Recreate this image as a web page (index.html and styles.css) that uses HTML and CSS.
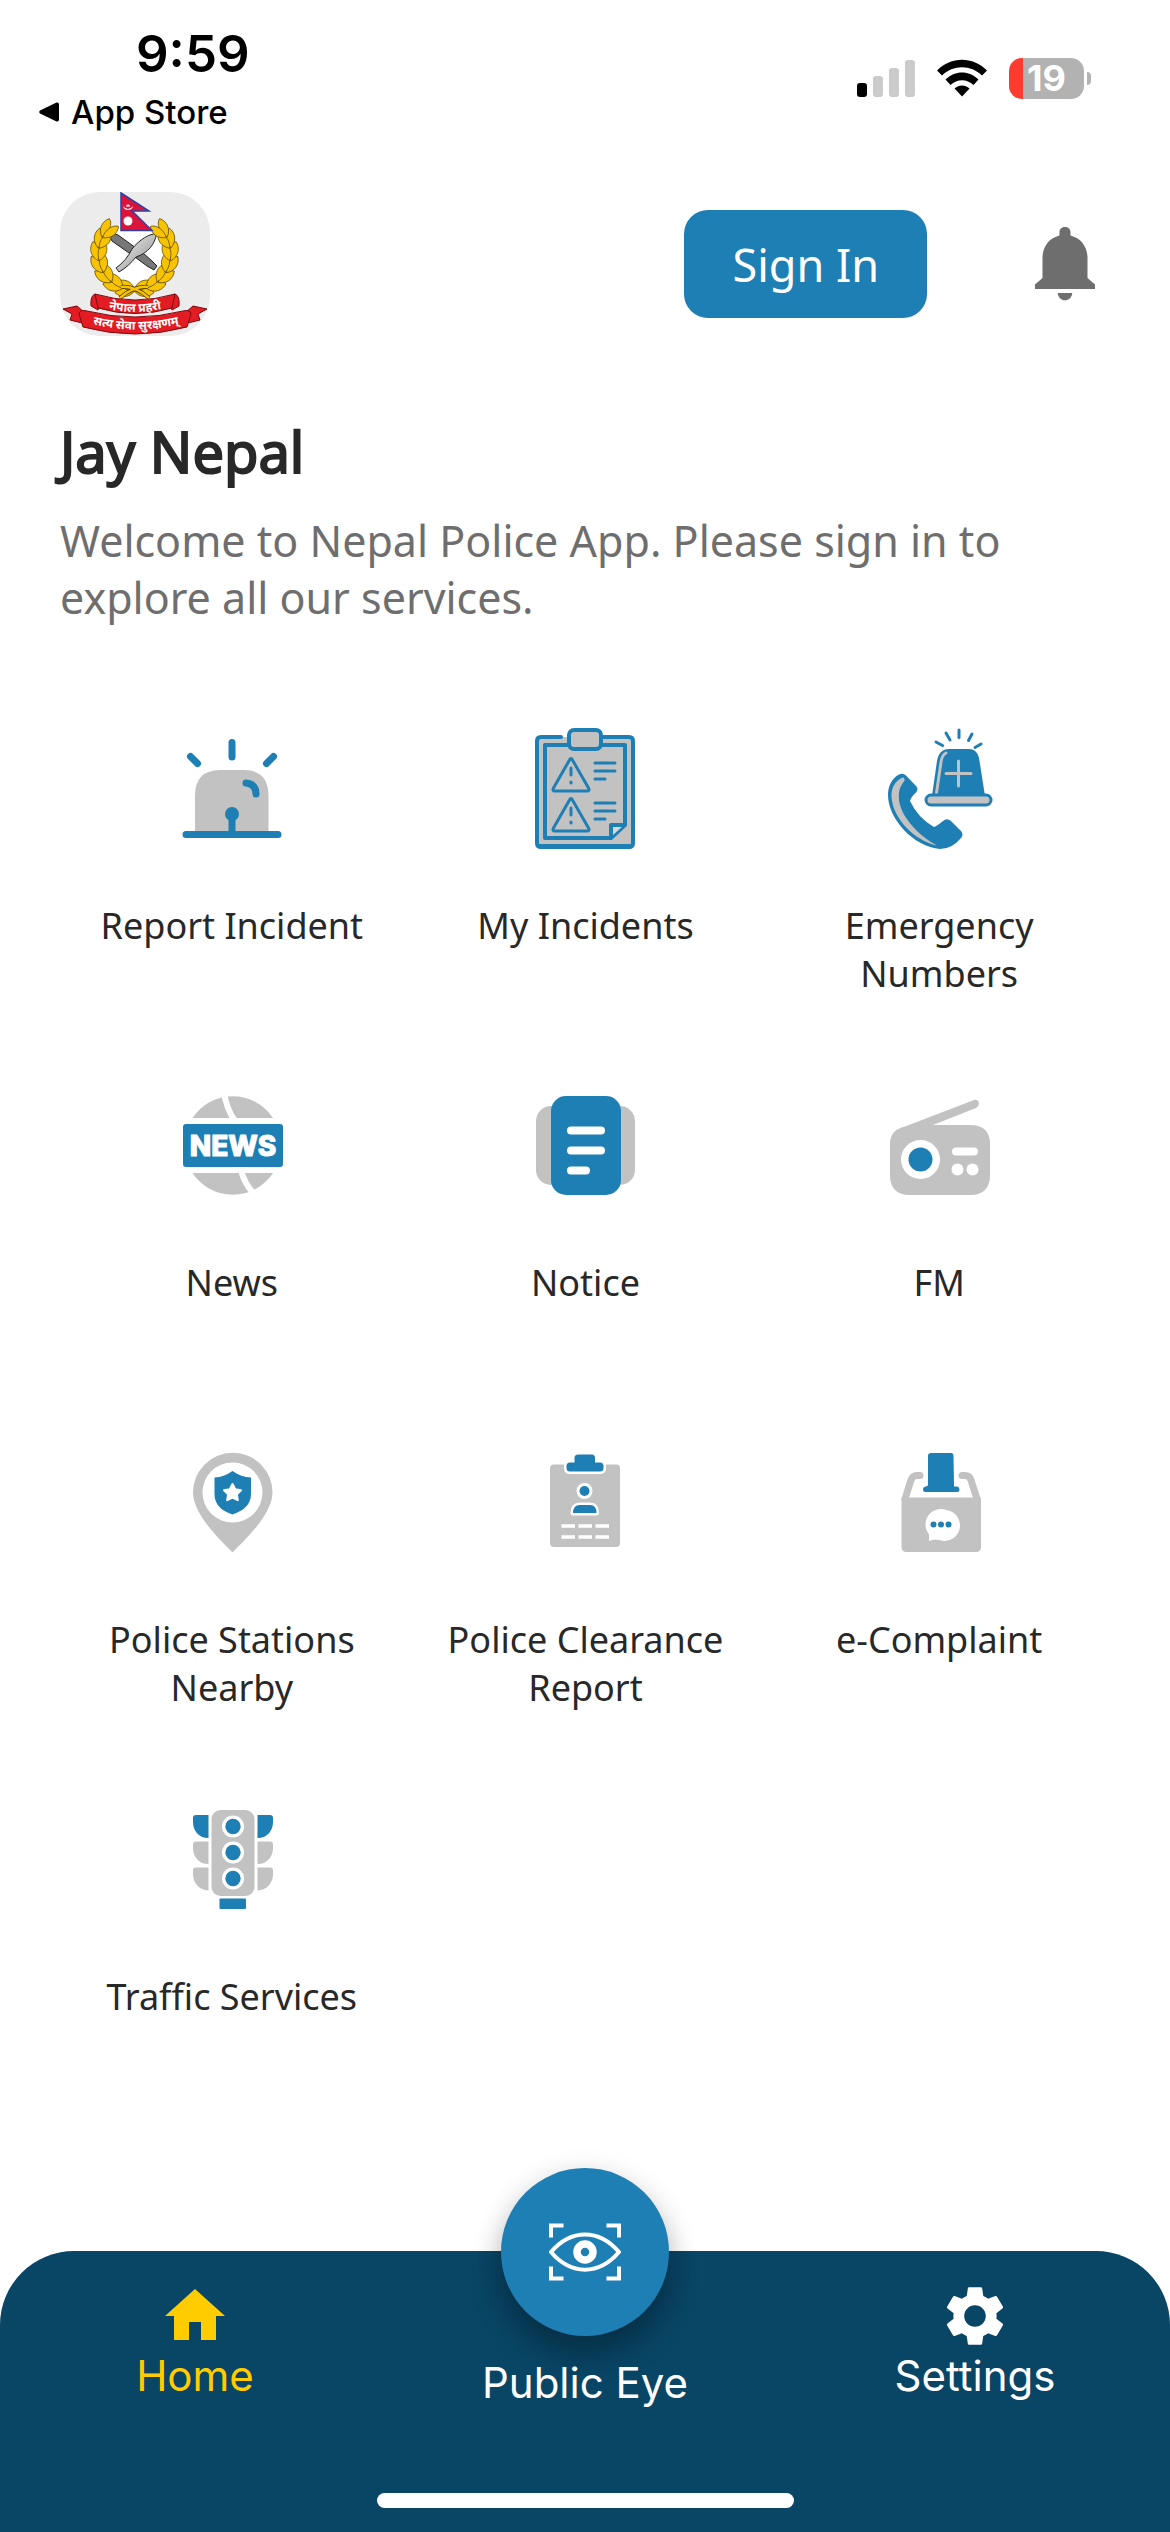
FILE: index.html
```html
<!DOCTYPE html>
<html lang="en">
<head>
<meta charset="utf-8">
<meta name="viewport" content="width=device-width, initial-scale=1">
<title>Nepal Police</title>
<link rel="stylesheet" href="styles.css">
</head>
<body>
<div class="status">
  <div class="status-left">
    <time class="clock">9:59</time>
    <a class="back" href="#">
      <svg class="back-arrow" viewBox="0 0 20 20" aria-hidden="true"><path d="M1 8.500 17.500.5Q20 0 20 2.500V17.500Q20 20 17.500 19.500L1 11.500Q-.5 10 1 8.500Z"/></svg>
      <span>App Store</span>
    </a>
  </div>
  <div class="status-right">
    <svg class="signal" viewBox="0 0 58 38" aria-hidden="true">
      <rect x="0" y="24" width="10" height="14" rx="3"/>
      <g fill="#cbcbcb"><rect x="16" y="17" width="10" height="21" rx="3"/><rect x="32" y="9" width="10" height="29" rx="3"/><rect x="48" y="1" width="10" height="37" rx="3"/></g>
    </svg>
    <svg class="wifi" viewBox="0 0 50 38" aria-hidden="true">
      <path d="M0 11.500C14-3 36-3 50 11.500L45 16.500C34 5.500 16 5.500 5 16.500Z"/>
      <path d="M8.500 20.500C18 11 32 11 41.500 20.500L36.500 26C30 19.500 20 19.500 13.500 26Z"/>
      <path d="M17.500 29.500C22 25.500 28 25.500 32.500 29.500L25 37.500Z"/>
    </svg>
    <div class="battery"><span>19</span></div>
  </div>
</div>

<header class="header">
  <svg class="logo" viewBox="0 0 150 144" role="img" aria-label="Nepal Police emblem">
    <defs>
      <g id="sprig" fill="#f8c300" stroke="#5a4600" stroke-width=".7">
        <path d="M8-36C4-44-4-46-11-42C-9-36-1-33 8-36Z"/>
        <path d="M8-35C3-27-5-26-11-30C-8-36 0-38 8-35Z"/>
      </g>
      <g id="branch">
        <use href="#sprig" transform="rotate(168)"/><use href="#sprig" transform="rotate(148)"/><use href="#sprig" transform="rotate(128)"/><use href="#sprig" transform="rotate(108)"/><use href="#sprig" transform="rotate(88)"/><use href="#sprig" transform="rotate(68)"/><use href="#sprig" transform="rotate(50)"/>
      </g>
      <linearGradient id="steel" x1="0" y1="0" x2="1" y2="1"><stop offset="0" stop-color="#f4f4f4"/><stop offset="1" stop-color="#8b8b8b"/></linearGradient>
    </defs>
    <rect width="150" height="144" rx="40" fill="#ececec"/>
    <circle cx="74.500" cy="62" r="33" fill="#fff"/>
    <path d="M51 43Q54 40 58 43L83 61 92 69 97 74 94 78 87 74 79 68 52 49Q49 46 51 43Z" fill="#777" stroke="#222" stroke-width="1"/>
    <path d="M96.500 42C90 41 79 48 72 57C68 65 63 71 56 76L59 80C66 76 71 71 76 65C88 61 95 52 96.500 42Z" fill="url(#steel)" stroke="#222" stroke-width="1"/>
    <g transform="translate(74.500 62)"><use href="#branch"/><use href="#branch" transform="scale(-1 1)"/></g>
    <path d="M60 106C68 99 78 94 88 95M89 106C81 99 71 94 61 95" fill="none" stroke="#4a3a00" stroke-width="4"/>
    <path d="M60 106C68 99 78 94 88 95M89 106C81 99 71 94 61 95" fill="none" stroke="#f8c300" stroke-width="2.500"/>
    <path d="M61 1 89 19H72L92 38.500H61Z" fill="#dc143c" stroke="#2e3fa0" stroke-width="1.500"/>
    <circle cx="68" cy="29" r="4.500" fill="#fff"/><path d="M63 14Q68 20 73 14Q72 18 68 18Q64 18 63 14ZM66 14.500a2 2 0 0 1 4 0Z" fill="#fff"/>
    <g fill="#e31b23" stroke="#7c0a10" stroke-width="1">
      <path d="M3 117 17 114 24 120 22 131 10 128 12 122Z"/><path d="M147 117 133 114 126 120 128 131 140 128 138 122Z"/>
      <path d="M19 122Q20 117 27 119Q75 131 123 119Q130 117 131 122L127 135Q75 149 23 135Z"/>
      <path d="M35 102Q30 104 31 114L38 118 42 108Z"/><path d="M115 102Q120 104 119 114L112 118 108 108Z"/>
      <path d="M35 102Q75 114 115 102L112 116Q75 127 38 116Z"/>
    </g>
    <path id="arc-top" d="M44 116Q75 124 106 116" fill="none"/>
    <path id="arc-bottom" d="M28 131Q75 144 124 131" fill="none"/>
    <text class="emblem-text" text-anchor="middle"><textPath href="#arc-top" startOffset="50%">नेपाल प्रहरी</textPath></text>
    <text class="emblem-text" text-anchor="middle"><textPath href="#arc-bottom" startOffset="50%">सत्य सेवा सुरक्षणम्</textPath></text>
  </svg>
  <div class="header-actions">
    <button class="sign-in" type="button">Sign In</button>
    <button class="bell" type="button" aria-label="Notifications">
      <svg viewBox="0 0 60 74" aria-hidden="true"><path d="M30 0c3 0 5.500 2 5.500 5v3.500C46 11 52.500 20 52.500 31V51L60 57.500V62H0V57.500L7.500 51V31C7.500 20 14 11 24.500 8.500V5C24.500 2 27 0 30 0ZM22.800 66h14.400c0 4-3.300 7.300-7.200 7.300s-7.200-3.300-7.200-7.300Z"/></svg>
    </button>
  </div>
</header>

<main class="main">
  <h1 class="title">Jay Nepal</h1>
  <p class="intro">Welcome to Nepal Police App. Please sign in to explore all our services.</p>

  <nav class="services" aria-label="Services">
    <a class="service" href="#">
      <svg class="icon" viewBox="0 0 124 124" aria-hidden="true">
        <path class="grey" d="M25 105V69Q25 43 50 43H74Q98.500 43 98.500 69V105Z"/>
        <path class="line" stroke-width="7" d="M16 107.500H108M62 15.500V30M20.500 29.500 27.500 36.500M103.500 29.500 96.500 36.500M62 87V107M76 56Q86 57 86 67"/>
        <circle class="blue" cx="62" cy="87" r="7"/>
      </svg>
      <span>Report Incident</span>
    </a>
    <a class="service" href="#">
      <svg class="icon" viewBox="0 0 124 124" aria-hidden="true">
        <rect class="grey" x="14" y="10" width="96" height="110" rx="3"/>
        <path class="line" stroke-width="4" d="M38 10H18Q14 10 14 14V116Q14 120 18 120H106Q110 120 110 116V14Q110 10 106 10H80"/>
        <path class="line" stroke-width="2" d="M15 118H109"/>
        <path class="line" stroke-width="4" d="M44 18H22V111H88L102 98V18H80"/>
        <path d="M88 98H101L89 109Z" fill="#d3d8db"/>
        <path class="line" stroke-width="4" d="M88 110V98H101"/>
        <rect x="46" y="3" width="32" height="19" rx="5" fill="#c2c2c2" stroke="#1e7fb4" stroke-width="4"/>
        <path class="line" stroke-width="3" d="M46.500 33 30.500 61Q29 64 32 64H64Q67 64 65.500 61L49.500 33Q48 30 46.500 33ZM48 41V48M48 55V56M46.500 73 30.500 101Q29 104 32 104H64Q67 104 65.500 101L49.500 73Q48 70 46.500 73ZM48 81V88M48 95V96M72 36H92M72 44H92M72 52H82M72 76H92M72 84H92M72 92H82"/>
      </svg>
      <span>My Incidents</span>
    </a>
    <a class="service" href="#">
      <svg class="icon" viewBox="0 0 124 124" aria-hidden="true">
        <path class="line" stroke-width="3" d="M82 3V10.500M69 6 73 13M59 15 65.500 18.500M95 7 91.500 13.500M104 17 98 20.500"/>
        <path class="blue" d="M55 69 60 34Q62 22 72 22H92Q101 22 102.500 34L108 69Z"/>
        <path d="M69 26Q65 28 64 35L59.500 66" fill="none" stroke="#c2c2c2" stroke-width="3" stroke-linecap="round"/>
        <rect x="49" y="68" width="65" height="10" rx="5" fill="#c2c2c2" stroke="#1e7fb4" stroke-width="3"/>
        <path d="M81.500 34V59M69 46.500H94" stroke="#c2c2c2" stroke-width="3" stroke-linecap="round"/>
        <path class="blue" d="M22 47.500Q26 45.500 29 48.500L39 59Q42 62 39 65.500Q34 70 33 74Q41 91 57 100Q60 99 66 94Q70 90.500 74 94L84 104Q87 107.500 84 111Q75 122 63 122C37 120 11 92 11 68C11 59 15 51 22 47.500Z"/>
        <path class="grey" d="M25.500 50.500C18 54 14 61 14.500 70C16 92 38 114 60 118.500C42 109 24 90 22 73C21 63 24 58 27.500 54Q28 50.500 25.500 50.500Z"/>
      </svg>
      <span>Emergency Numbers</span>
    </a>

    <a class="service" href="#">
      <svg class="icon" viewBox="0 0 124 124" aria-hidden="true">
        <path class="grey" d="M22.500 34A48 48 0 0 1 103 34ZM22.500 89A48 48 0 0 0 103 89Z"/>
        <path d="M54 8Q56 24 65 37M71 86Q74 99 84 110" fill="none" stroke="#fff" stroke-width="6"/>
        <rect class="blue" x="13" y="40" width="100" height="43" rx="3"/>
        <text class="news-text" x="63" y="72" text-anchor="middle">NEWS</text>
      </svg>
      <span>News</span>
    </a>
    <a class="service" href="#">
      <svg class="icon" viewBox="0 0 124 124" aria-hidden="true">
        <rect class="grey" x="13" y="22" width="99" height="79" rx="15"/>
        <rect class="blue" x="28" y="12" width="70" height="99" rx="15"/>
        <path d="M48 46.500H78M48 66.500H78M48 86.500H63" stroke="#fff" stroke-width="8" stroke-linecap="round"/>
      </svg>
      <span>Notice</span>
    </a>
    <a class="service" href="#">
      <svg class="icon" viewBox="0 0 124 124" aria-hidden="true">
        <path class="grey" d="M28 42.500 97 16Q101 15 102 19Q102 22 99 24L56 41H93Q113 41 113 60V91Q113 111 93 111H33Q13 111 13 91V60Q13 46 28 42.500Z"/>
        <circle cx="43.500" cy="75.500" r="19.500" fill="#fff"/><circle class="blue" cx="43.500" cy="75.500" r="12"/>
        <path d="M79 67.500H97" stroke="#fff" stroke-width="8" stroke-linecap="round"/>
        <circle cx="80.500" cy="85.500" r="6" fill="#fff"/><circle cx="95.500" cy="85.500" r="6" fill="#fff"/>
      </svg>
      <span>FM</span>
    </a>

    <a class="service" href="#">
      <svg class="icon" viewBox="0 0 124 124" aria-hidden="true">
        <path class="grey" d="M62.500 111.500C50 99 23 73 23 51.500A39.700 39.700 0 0 1 102.500 51.500C102.500 73 75 99 62.500 111.500Z"/>
        <circle cx="62.500" cy="51.500" r="30" fill="#fff"/>
        <path class="blue" d="M62.500 30Q71 36 81 36.500V53C81 64 73 70 62.500 73.500C52 70 44.500 64 44.500 53V36.500Q54 36 62.500 30Z"/>
        <path d="M62.500 43 65.200 48.300 71 49.200 66.900 53.400 67.800 59.200 62.500 56.500 57.200 59.200 58.100 53.400 54 49.200 59.800 48.300Z" fill="#fff" stroke="#fff" stroke-width="2" stroke-linejoin="round"/>
      </svg>
      <span>Police Stations Nearby</span>
    </a>
    <a class="service" href="#">
      <svg class="icon" viewBox="0 0 124 124" aria-hidden="true">
        <rect class="grey" x="27" y="23.500" width="70" height="82.500" rx="4"/>
        <path d="M47 21.500H51.500V17Q51.500 13.500 55 13.500H69Q72 13.500 72 17V21.500H77Q80.500 21.500 80.500 25V27Q80.500 30.500 77 30.500H47Q43.500 30.500 43.500 27V25Q43.500 21.500 47 21.500Z" fill="#1e7fb4" stroke="#fff" stroke-width="5" paint-order="stroke"/>
        <circle cx="61.500" cy="50" r="5" fill="#1e7fb4" stroke="#fff" stroke-width="6" paint-order="stroke"/>
        <path d="M50 72Q50 64 57 64H67Q73.500 64 73.500 72Z" fill="#1e7fb4" stroke="#fff" stroke-width="5" stroke-linejoin="round" paint-order="stroke"/>
        <path d="M38.500 85H52M55.500 85H69M72.500 85H86M38.500 96H52M55.500 96H69M72.500 96H86" stroke="#fff" stroke-width="3.500"/>
      </svg>
      <span>Police Clearance Report</span>
    </a>
    <a class="service" href="#">
      <svg class="icon" viewBox="0 0 124 124" aria-hidden="true">
        <path d="M28 58 34 39Q35.500 34.500 40 34.500H43M100 58 94 39Q92.500 34.500 88 34.500H85" fill="none" stroke="#c2c2c2" stroke-width="7" stroke-linecap="round"/>
        <path class="grey" d="M24.500 56.500H104V106Q104 111 99 111H29.500Q24.500 111 24.500 106Z"/>
        <path class="blue" d="M54 12H74Q76.500 12 76.500 15L77 45.500H80Q82.500 46 82.500 48.500T80 51H48.500Q46 51 46 48.500T48.500 45.500Q51 45.500 51 43V15Q51 12 54 12Z"/>
        <path d="M52 100V84A15.500 15.500 0 1 1 61 98.500Q56 98 52 100Z" fill="#fff"/>
        <circle cx="64" cy="83.500" r="15.500" fill="#fff"/>
        <g class="blue"><circle cx="56.500" cy="83.500" r="3"/><circle cx="64" cy="83.500" r="3"/><circle cx="71.500" cy="83.500" r="3"/></g>
      </svg>
      <span>e-Complaint</span>
    </a>

    <a class="service" href="#">
      <svg class="icon" viewBox="0 0 124 124" aria-hidden="true">
        <rect class="grey" x="41.500" y="12" width="43" height="86" rx="9"/>
        <g fill="#fff"><circle cx="63" cy="28.500" r="11"/><circle cx="63" cy="54.500" r="11"/><circle cx="63" cy="80.500" r="11"/></g>
        <g class="blue"><circle cx="63" cy="28.500" r="7.700"/><circle cx="63" cy="54.500" r="7.700"/><circle cx="63" cy="80.500" r="7.700"/>
          <rect x="49.500" y="100.500" width="26.500" height="10.500" rx="1"/>
          <path d="M38.500 17V40C28 40 23 32 23 24V20Q23 17 26 17ZM87.500 17V40C98 40 103 32 103 24V20Q103 17 100 17Z"/></g>
        <path class="grey" d="M38.500 43.500V66C28 66 23 58 23 50V46.500Q23 43.500 26 43.500ZM87.500 43.500V66C98 66 103 58 103 50V46.500Q103 43.500 100 43.500ZM38.500 69.500V92.500C28 92 23 84 23 76V72.500Q23 69.500 26 69.500ZM87.500 69.500V92.500C98 92 103 84 103 76V72.500Q103 69.500 100 69.500Z"/>
      </svg>
      <span>Traffic Services</span>
    </a>
  </nav>
</main>

<footer class="tabbar">
  <nav class="tabs" aria-label="Main">
    <a class="tab tab-active" href="#" aria-current="page">
      <svg class="tab-icon" viewBox="0 0 24 24" aria-hidden="true"><path d="M10 20v-6h4v6h5v-8h3L12 3 2 12h3v8z"/></svg>
      <span>Home</span>
    </a>
    <a class="tab" href="#">
      <span class="fab">
        <svg viewBox="0 0 72 58" aria-hidden="true" fill="none" stroke="#fff">
          <path stroke-width="4" d="M2 14.500V2.500H14.500M57.500 2.500H70V14.500M2 43.500V55.500H14.500M57.500 55.500H70V43.500"/>
          <path stroke-width="4" stroke-linejoin="round" d="M2 29C22 5.500 50 5.500 70 29C50 52.500 22 52.500 2 29Z"/>
          <circle cx="36" cy="29" r="8" stroke-width="7.500"/>
        </svg>
      </span>
      <span>Public Eye</span>
    </a>
    <a class="tab" href="#">
      <svg class="tab-icon" viewBox="0 0 24 24" aria-hidden="true"><path d="M19.140 12.940c.04-.3.06-.61.06-.94 0-.32-.02-.64-.07-.94l2.030-1.580c.18-.14.23-.41.12-.61l-1.920-3.320c-.12-.22-.37-.29-.59-.22l-2.390.96c-.5-.38-1.030-.7-1.620-.94L14.400 2.810c-.04-.24-.24-.41-.48-.41h-3.840c-.24 0-.43.17-.47.41L9.250 5.350C8.660 5.590 8.120 5.920 7.630 6.290L5.240 5.330c-.22-.08-.47 0-.59.22L2.740 8.870c-.12.21-.08.47.12.61l2.030 1.580C4.840 11.360 4.800 11.690 4.800 12s.02.64.07.94l-2.030 1.580c-.18.14-.23.41-.12.61l1.920 3.320c.12.22.37.29.59.22l2.390-.96c.5.38 1.030.7 1.620.94l.36 2.540c.05.24.24.41.48.41h3.840c.24 0 .44-.17.47-.41l.36-2.540c.59-.24 1.130-.56 1.620-.94l2.390.96c.22.08.47 0 .59-.22l1.920-3.320c.12-.22.07-.47-.12-.61L19.140 12.940zM12 15.600c-1.980 0-3.600-1.620-3.600-3.600s1.620-3.600 3.600-3.600 3.600 1.620 3.600 3.600-1.620 3.600-3.600 3.600z"/></svg>
      <span>Settings</span>
    </a>
  </nav>
  <div class="home-indicator"></div>
</footer>
</body>
</html>
```
FILE: styles.css
```css
:root {
  --blue: #1e7fb4;
  --navy: #094565;
  --grey: #c2c2c2;
  --text: #282828;
  --muted: #6e6e6e;
}

* { box-sizing: border-box; }

body {
  margin: 0;
  min-height: 100vh;
  display: flex;
  flex-direction: column;
  background: #fff;
  color: var(--text);
  font-family: "Noto Sans", sans-serif;
}

a { color: inherit; text-decoration: none; }
svg { display: block; }

/* Status bar */
.status {
  display: flex;
  justify-content: space-between;
  align-items: center;
  padding: 24px 79px 0 39px;
  color: #000;
  font-family: Inter, "Liberation Sans", sans-serif;
}
.status-left { display: flex; flex-direction: column; gap: 8px; }
.clock { padding-left: 97px; font-size: 51px; line-height: 60px; font-weight: 600; }
.back { display: flex; align-items: center; gap: 12px; font-size: 33px; line-height: 40px; font-weight: 500; }
.back-arrow { width: 20px; height: 20px; }
.status-right { display: flex; align-items: center; gap: 22px; }
.signal { width: 58px; height: 38px; }
.wifi { width: 50px; height: 38px; }
.battery {
  position: relative;
  width: 75px;
  height: 41px;
  margin-right: 7px;
  border-radius: 13px;
  background: linear-gradient(90deg, #ff3b30 14px, #b2b2b2 14px);
  color: #fff;
  font-size: 36px;
  line-height: 41px;
  font-weight: 700;
  text-align: center;
}
.battery::after {
  content: "";
  position: absolute;
  right: -7px;
  top: 14px;
  width: 4px;
  height: 13px;
  border-radius: 0 4px 4px 0;
  background: #b2b2b2;
}

/* Header */
.header {
  display: flex;
  justify-content: space-between;
  align-items: center;
  margin-top: 60px;
  padding: 0 75px 0 60px;
}
.logo { width: 150px; height: 144px; }
.emblem-text { fill: #fff; font-family: "Noto Sans", "Noto Sans Devanagari", sans-serif; font-size: 12px; font-weight: 700; }
.header-actions { display: flex; align-items: center; gap: 108px; }
.sign-in {
  padding: 23px 48px 21px;
  border: 0;
  border-radius: 24px;
  background: var(--blue);
  color: #fff;
  font: 400 45px/64px "Noto Sans", sans-serif;
}
.bell { padding: 0; border: 0; background: none; fill: var(--muted); }
.bell svg { width: 60px; height: 74px; }

/* Main */
.title {
  margin: 83px 60px 0;
  font-size: 56px;
  line-height: 64px;
  font-weight: 400;
  -webkit-text-stroke: 2px currentColor;
}
.intro { margin: 29px 60px 0; color: var(--muted); font-size: 43px; line-height: 57px; }

.services {
  display: grid;
  grid-template-columns: repeat(3, 1fr);
  grid-auto-rows: minmax(271px, auto);
  row-gap: 86px;
  margin: 101px 54px 86px 55px;
}
.service {
  display: flex;
  flex-direction: column;
  align-items: center;
  gap: 51px;
  padding: 0 24px;
  font-size: 36px;
  line-height: 48px;
  text-align: center;
}
.icon { width: 124px; height: 124px; }
.grey { fill: var(--grey); }
.blue { fill: var(--blue); }
.line { fill: none; stroke: var(--blue); stroke-linecap: round; stroke-linejoin: round; }
.news-text {
  fill: #fff;
  stroke: #fff;
  stroke-width: 1px;
  stroke-linejoin: round;
  font: 800 28px Inter, "Liberation Sans", sans-serif;
}

/* Tab bar */
.tabbar {
  display: flex;
  flex-direction: column;
  align-items: center;
  gap: 86px;
  margin-top: auto;
  padding: 29px 0 24px;
  border-radius: 74px 74px 0 0;
  background: var(--navy);
  color: #fff;
  font-family: Inter, "Liberation Sans", sans-serif;
}
.tabs { display: grid; grid-template-columns: repeat(3, 1fr); align-self: stretch; }
.tab {
  display: flex;
  flex-direction: column;
  align-items: center;
  fill: currentColor;
  font-size: 42px;
  line-height: 48px;
}
.tab-active { color: #fc0; }
.tab-icon { width: 72px; height: 72px; }
.fab {
  display: grid;
  place-items: center;
  width: 168px;
  height: 168px;
  margin: -112px 0 23px;
  border-radius: 50%;
  background: var(--blue);
  box-shadow: 0 18px 30px rgba(0, 0, 0, .28), 0 3px 30px rgba(0, 0, 0, .08);
}
.fab svg { width: 72px; height: 58px; }
.home-indicator { width: 417px; max-width: 60%; height: 15px; border-radius: 8px; background: #fff; }
```
